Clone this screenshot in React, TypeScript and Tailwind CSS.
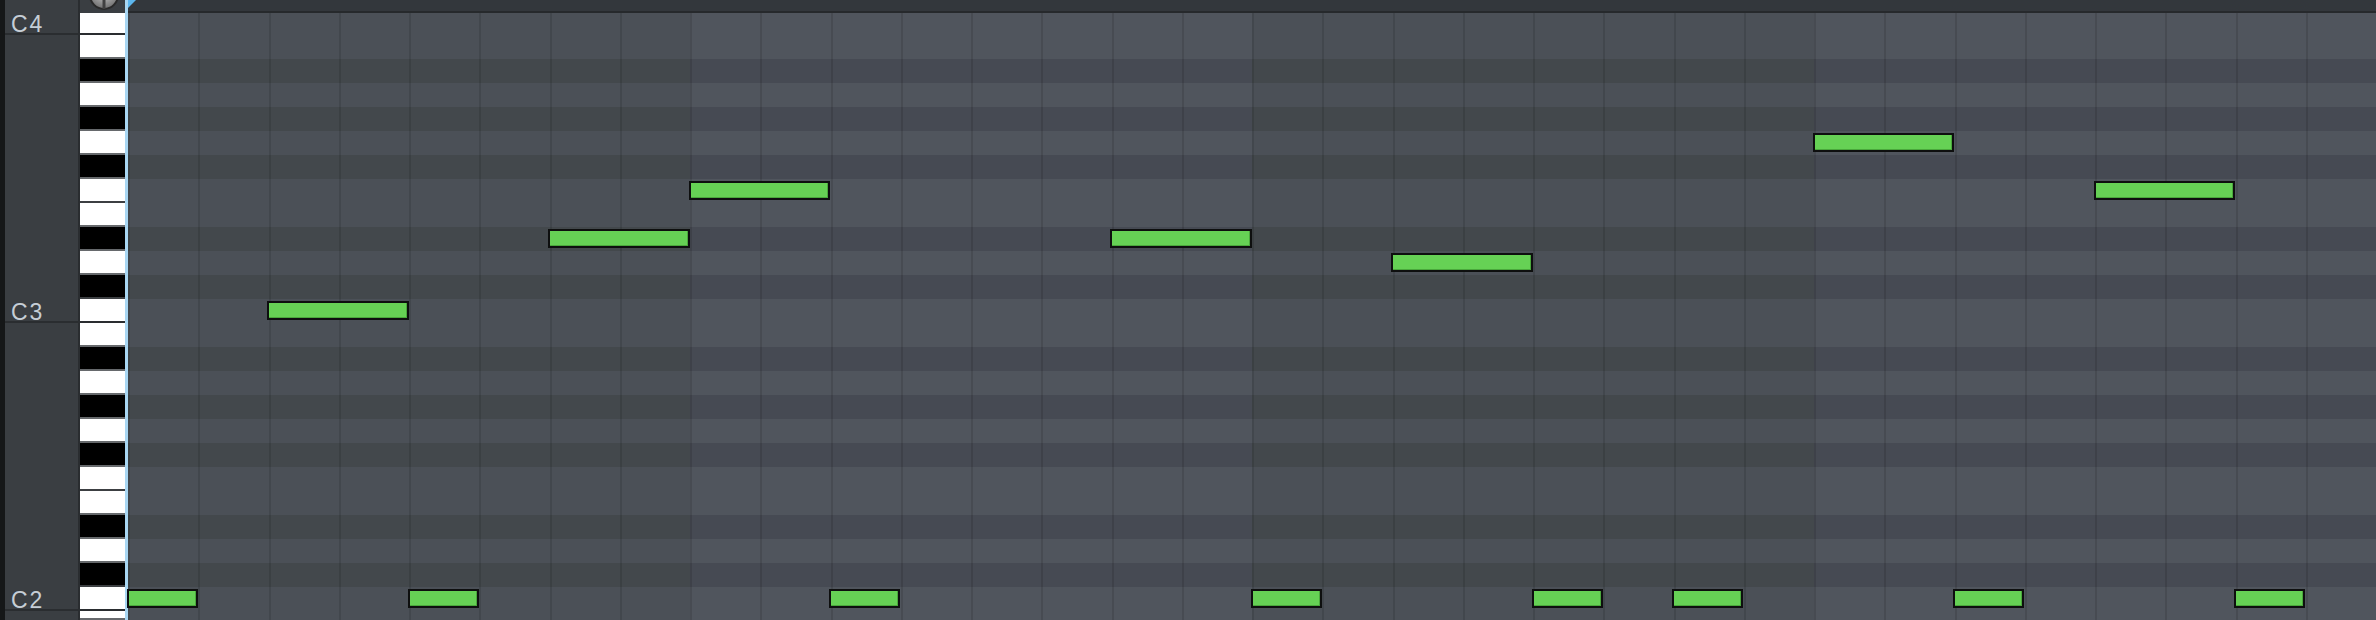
const BEAT = 70.25;
const NAMES = ['C', 'B', 'A#', 'A', 'G#', 'G', 'F#', 'F', 'E', 'D#', 'D', 'C#'];

type Note = { beat: number; len: number; row: number };

const notes: Note[] = [
  { beat: 2, len: 2, row: 12 },
  { beat: 6, len: 2, row: 9 },
  { beat: 8, len: 2, row: 7 },
  { beat: 14, len: 2, row: 9 },
  { beat: 18, len: 2, row: 10 },
  { beat: 24, len: 2, row: 5 },
  { beat: 28, len: 2, row: 7 },
  { beat: 0, len: 1, row: 24 },
  { beat: 4, len: 1, row: 24 },
  { beat: 10, len: 1, row: 24 },
  { beat: 16, len: 1, row: 24 },
  { beat: 20, len: 1, row: 24 },
  { beat: 22, len: 1, row: 24 },
  { beat: 26, len: 1, row: 24 },
  { beat: 30, len: 1, row: 24 },
];

// C4 at index 0, down to B1 at index 25
const rows = Array.from({ length: 26 }, (_, i) => {
  const name = NAMES[i % 12];
  return { name, black: name.includes('#'), isC: name === 'C', isF: name === 'F' };
});

function rowHeight(i: number) {
  if (i === 0) return 'h-[22px]';
  if (i === 25) return 'flex-1';
  return 'h-[24px]';
}

function Knob() {
  return (
    <svg className="absolute left-[9px] top-[-20px] h-[30px] w-[30px]" viewBox="0 0 30 30">
      <defs>
        <radialGradient id="knob" cx="50%" cy="35%" r="65%">
          <stop offset="0%" stopColor="#d4d4d4" />
          <stop offset="100%" stopColor="#6e6e6e" />
        </radialGradient>
      </defs>
      <circle cx="15" cy="15" r="14" fill="url(#knob)" stroke="#2a2a2a" strokeWidth="2" />
      <rect x="13.5" y="12" width="3" height="17" fill="#404040" />
    </svg>
  );
}

function Labels() {
  const sections = [
    { label: 'C4', h: 'h-[35px]' },
    { label: 'C3', h: 'h-[288px]' },
    { label: 'C2', h: 'h-[288px]' },
  ];
  return (
    <div className="flex w-[73px] flex-col bg-[#3a3e42]">
      {sections.map((s) => (
        <div key={s.label} className={`${s.h} flex items-end border-b-2 border-[#2a2d30] pl-[6px]`}>
          <span className="text-[23px] leading-[18px] tracking-[2px] text-[#c6ced6]">{s.label}</span>
        </div>
      ))}
      <div className="flex-1" />
    </div>
  );
}

function Keys() {
  return (
    <div className="flex w-[45px] flex-col">
      <div className="relative h-[13px] overflow-hidden bg-[#3a3e42]">
        <Knob />
      </div>
      {rows.map((r, i) => {
        const next = rows[i + 1];
        let border = 'border-[#66696c]';
        if (r.isC) border = 'border-[#2a2d30]';
        else if (r.isF || (next && next.isC)) border = 'border-[#3c3f42]';
        return (
          <div
            key={i}
            className={`${rowHeight(i)} border-b-2 ${border} ${r.black ? 'bg-black' : 'bg-white'}`}
          />
        );
      })}
    </div>
  );
}

function Grid() {
  return (
    <div className="relative flex flex-1 flex-col">
      {/* top bar */}
      <div className="relative h-[13px] border-b-2 border-[#26292c] bg-[#33373c]">
        <svg className="absolute left-0 top-0 h-[8px] w-[8px]" viewBox="0 0 8 8">
          <polygon points="0,0 8,0 0,8" fill="#5cb6ee" />
        </svg>
      </div>

      {/* rows */}
      {rows.map((r, i) => (
        <div key={i} className={`${rowHeight(i)} flex`}>
          {[0, 1, 2, 3].map((seg) => {
            const light = seg % 2 === 1;
            let bg: string;
            if (r.black) bg = light ? 'bg-[#464a53]' : 'bg-[#43484c]';
            else bg = light ? 'bg-[#50555d]' : 'bg-[#4b5057]';
            return <div key={seg} className={`flex-1 ${bg}`} />;
          })}
        </div>
      ))}

      {/* beat lines */}
      <div className="pointer-events-none absolute inset-x-0 bottom-0 top-[13px] grid grid-cols-[repeat(32,minmax(0,1fr))]">
        {Array.from({ length: 32 }, (_, i) => (
          <div key={i} className="border-l-2 border-[rgba(0,0,0,0.11)]" />
        ))}
      </div>

      {/* notes */}
      <div className="pointer-events-none absolute inset-0">
        {notes.map((n, i) => (
          <div
            key={i}
            className="absolute h-[19px] border-2 border-[#0e0f0f] bg-[#66d155] shadow-[inset_-1px_-1px_0_#4aa83c]"
            style={{
              left: n.beat * BEAT - 1.5,
              width: n.len * BEAT + 1,
              top: 35 + (n.row - 1) * 24 + 2,
            }}
          />
        ))}
      </div>
    </div>
  );
}

export default function App() {
  return (
    <div className="flex h-[620px] w-[2376px] overflow-hidden bg-[#3a3e42] font-['Liberation_Sans',Arial,sans-serif]">
      <div className="w-[5px] bg-[#151718]" />
      <Labels />
      <div className="w-[2px] bg-[#2a2d30]" />
      <Keys />
      <div className="w-[3px] bg-[#a8d6f2]" />
      <Grid />
    </div>
  );
}
